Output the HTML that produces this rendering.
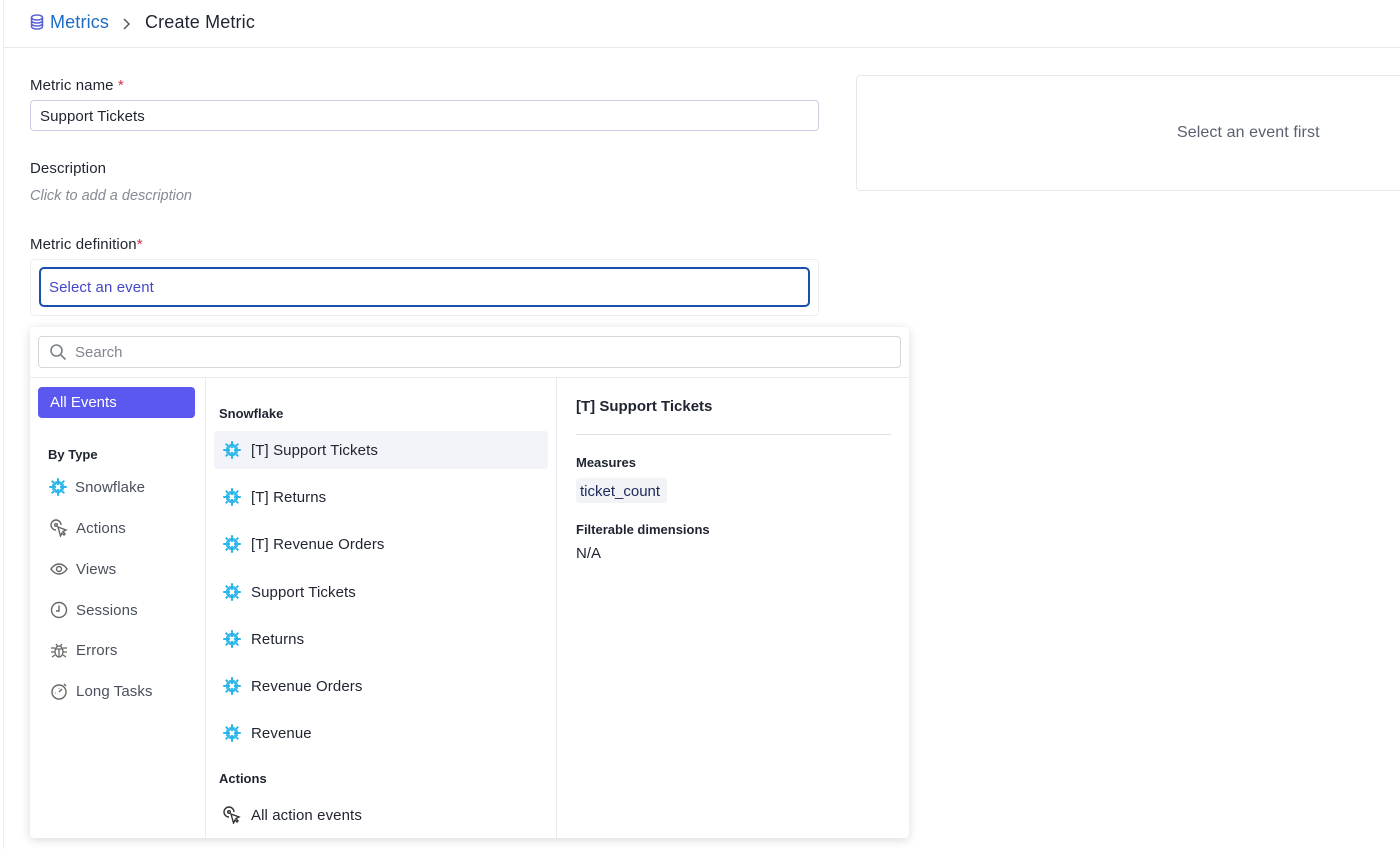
<!DOCTYPE html>
<html><head><meta charset="utf-8"><style>
*{box-sizing:border-box;margin:0;padding:0}
body{width:1400px;height:849px;overflow:hidden;background:#fff;font-family:"Liberation Sans",sans-serif;color:#1f2430;position:relative}
.a{position:absolute;white-space:nowrap}
.t{padding-top:1px}
.lbl{font-size:15px;color:#1f2430;letter-spacing:.1px}
.star{color:#d6304a}
.sf{width:18px;height:18px}
.mi{font-size:15px;color:#1f2430;display:flex;align-items:center;gap:10px;letter-spacing:.1px}
.li{font-size:15px;color:#4a505c;display:flex;align-items:center;gap:8px;letter-spacing:.1px}
</style></head><body>
<svg width="0" height="0" style="position:absolute"><defs>
<g id="snow" stroke="#29b5e8" stroke-width="2" stroke-linecap="round" fill="none">
<path d="M9 1v5M9 12v5M1 9h5M12 9h5M3.3 3.3l3 3M11.7 11.7l3 3M14.7 3.3l-3 3M6.3 11.7l-3 3"/><path d="M7 4l2 2 2-2M7 14l2-2 2 2M4 7l2 2-2 2M14 7l-2 2 2 2"/>
</g></defs></svg>
<div class="a" style="left:3px;top:0;width:1px;height:849px;background:#eceef2"></div>
<div class="a" style="left:3px;top:47px;width:1397px;height:1px;background:#e8eaee"></div>
<svg class="a" style="left:30px;top:14px" width="14" height="16" viewBox="0 0 14 16" fill="none" stroke="#5b5fd6" stroke-width="1.5"><ellipse cx="7" cy="3.5" rx="5.5" ry="2.5"/><path d="M1.5 3.5v9c0 1.4 2.5 2.5 5.5 2.5s5.5-1.1 5.5-2.5v-9M1.5 6.5c0 1.4 2.5 2.5 5.5 2.5s5.5-1.1 5.5-2.5M1.5 9.5c0 1.4 2.5 2.5 5.5 2.5s5.5-1.1 5.5-2.5"/></svg>
<div class="a" style="left:50px;top:12px;font-size:18px;color:#1d6cc4;letter-spacing:.15px">Metrics</div>
<svg class="a" style="left:121px;top:17px" width="10" height="14" viewBox="0 0 10 14" fill="none" stroke="#555" stroke-width="1.5"><path d="M3 2l5 5-5 5"/></svg>
<div class="a" style="left:145px;top:12px;font-size:18px;color:#1f2430;letter-spacing:.15px">Create Metric</div>

<div class="a lbl t" style="left:30px;top:76px">Metric name <span class="star">*</span></div>
<div class="a" style="left:30px;top:100px;width:789px;height:31px;border:1px solid #c9cde6;border-radius:4px;font-size:15px;padding:7px 9px 0;letter-spacing:.1px">Support Tickets</div>
<div class="a lbl t" style="left:30px;top:159px">Description</div>
<div class="a t" style="left:30px;top:187px;font-size:14.5px;font-style:italic;color:#858a94">Click to add a description</div>
<div class="a lbl t" style="left:30px;top:235px">Metric definition<span class="star">*</span></div>
<div class="a" style="left:30px;top:259px;width:789px;height:57px;border:1px solid #eceef2;border-radius:4px"></div>
<div class="a" style="left:39px;top:267px;width:771px;height:40px;border:2.5px solid #1a4fb0;border-radius:5px;font-size:15px;color:#4347c8;padding:10px 8px 0;letter-spacing:.1px">Select an event</div>

<div class="a" style="left:856px;top:75px;width:560px;height:116px;border:1px solid #e6e8ec;border-radius:4px"></div>
<div class="a t" style="left:1177px;top:123px;font-size:16px;color:#5a6070;letter-spacing:.1px">Select an event first</div>

<div class="a" style="left:30px;top:327px;width:879px;height:511px;background:#fff;border-radius:4px;box-shadow:0 2px 10px rgba(0,0,0,.15)"></div>
<div class="a" style="left:38px;top:336px;width:863px;height:32px;border:1px solid #d3d6dc;border-radius:4px"></div>
<svg class="a" style="left:49px;top:343px" width="18" height="18" viewBox="0 0 18 18" fill="none" stroke="#7a7f88" stroke-width="1.6"><circle cx="7.5" cy="7.5" r="5.5"/><path d="M11.5 11.5l5 5"/></svg>
<div class="a t" style="left:75px;top:343px;font-size:15px;color:#80858e">Search</div>
<div class="a" style="left:30px;top:377px;width:879px;height:1px;background:#e8eaee"></div>
<div class="a" style="left:205px;top:377px;width:1px;height:461px;background:#e8eaee"></div>
<div class="a" style="left:556px;top:377px;width:1px;height:461px;background:#e8eaee"></div>

<div class="a" style="left:38px;top:387px;width:157px;height:31px;background:#5a58ee;border-radius:4px;color:#fff;font-size:15px;padding:7px 12px 0">All Events</div>
<div class="a t" style="left:48px;top:446px;font-size:13px;font-weight:bold">By Type</div>
<div class="a li t" style="left:49px;top:477px"><svg class="sf" width="18" height="18"><use href="#snow"/></svg>Snowflake</div>
<div class="a li t" style="left:50px;top:518px"><svg width="18" height="18" viewBox="0 0 18 18" fill="none" stroke="#666" stroke-width="1.4"><path d="M11 6a5 5 0 1 0-5 5"/><circle cx="6" cy="6" r="1.3"/><path d="M8 8l8 3-3 1.5L15 15l-1 1-2-2-1.5 3z"/></svg>Actions</div>
<div class="a li t" style="left:50px;top:559px"><svg width="18" height="18" viewBox="0 0 18 18" fill="none" stroke="#666" stroke-width="1.4"><path d="M1 9s3-5 8-5 8 5 8 5-3 5-8 5-8-5-8-5z"/><circle cx="9" cy="9" r="2.5"/></svg>Views</div>
<div class="a li t" style="left:50px;top:600px"><svg width="18" height="18" viewBox="0 0 18 18" fill="none" stroke="#666" stroke-width="1.4"><circle cx="9" cy="9" r="7.5"/><path d="M9 4.5V10H6"/></svg>Sessions</div>
<div class="a li t" style="left:50px;top:640px"><svg width="18" height="18" viewBox="0 0 18 18" fill="none" stroke="#666" stroke-width="1.3"><ellipse cx="9" cy="10.5" rx="4" ry="5.5"/><path d="M5 8h8M9 8v8M6 3l1.5 2M12 3l-1.5 2M1 7h4M13 7h4M1 11h4M13 11h4M2 16l3-2M16 16l-3-2"/></svg>Errors</div>
<div class="a li t" style="left:50px;top:681px"><svg width="18" height="18" viewBox="0 0 18 18" fill="none" stroke="#666" stroke-width="1.4"><circle cx="9" cy="10" r="7"/><path d="M9 10l3-3M14 2l2 2M5 11h.5M9 6v.5"/></svg>Long Tasks</div>

<div class="a t" style="left:219px;top:405px;font-size:13px;font-weight:bold">Snowflake</div>
<div class="a" style="left:214px;top:431px;width:334px;height:38px;background:#f3f4fa;border-radius:3px"></div>
<div class="a mi t" style="left:223px;top:440px"><svg class="sf"><use href="#snow"/></svg>[T] Support Tickets</div>
<div class="a mi t" style="left:223px;top:487px"><svg class="sf"><use href="#snow"/></svg>[T] Returns</div>
<div class="a mi t" style="left:223px;top:534px"><svg class="sf"><use href="#snow"/></svg>[T] Revenue Orders</div>
<div class="a mi t" style="left:223px;top:582px"><svg class="sf"><use href="#snow"/></svg>Support Tickets</div>
<div class="a mi t" style="left:223px;top:629px"><svg class="sf"><use href="#snow"/></svg>Returns</div>
<div class="a mi t" style="left:223px;top:676px"><svg class="sf"><use href="#snow"/></svg>Revenue Orders</div>
<div class="a mi t" style="left:223px;top:723px"><svg class="sf"><use href="#snow"/></svg>Revenue</div>
<div class="a t" style="left:219px;top:770px;font-size:13px;font-weight:bold">Actions</div>
<div class="a mi t" style="left:223px;top:805px"><svg width="18" height="18" viewBox="0 0 18 18" fill="none" stroke="#333" stroke-width="1.4"><path d="M11 6a5 5 0 1 0-5 5"/><circle cx="6" cy="6" r="1.3"/><path d="M8 8l8 3-3 1.5L15 15l-1 1-2-2-1.5 3z"/></svg>All action events</div>

<div class="a t" style="left:576px;top:397px;font-size:15px;font-weight:bold">[T] Support Tickets</div>
<div class="a" style="left:576px;top:434px;width:315px;height:1px;background:#dfe1e5"></div>
<div class="a t" style="left:576px;top:454px;font-size:13px;font-weight:bold">Measures</div>
<div class="a" style="left:576px;top:478px;width:91px;height:25px;background:#f1f3f6;border-radius:3px;font-size:15px;color:#1c2a5a;padding:5px 4px 0">ticket_count</div>
<div class="a t" style="left:576px;top:521px;font-size:13px;font-weight:bold">Filterable dimensions</div>
<div class="a t" style="left:576px;top:544px;font-size:15px">N/A</div>
</body></html>
